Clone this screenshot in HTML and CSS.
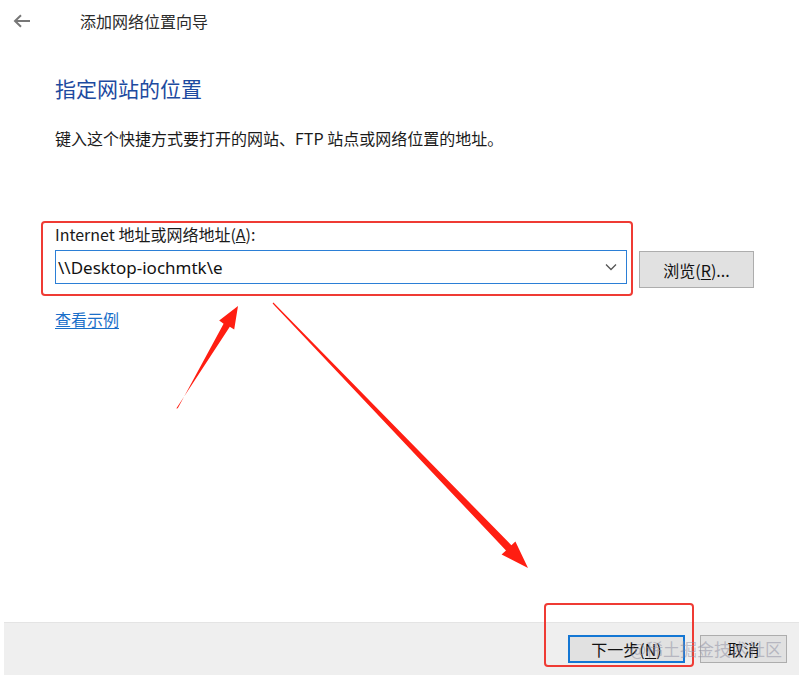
FILE: index.html
```html
<!DOCTYPE html>
<html lang="zh-CN">
<head>
<meta charset="utf-8">
<title>添加网络位置向导</title>
<link rel="stylesheet" href="styles.css">
</head>
<body>
<div class="window">
  <header class="titlebar">
    <svg class="back" width="18" height="14" viewBox="0 0 18 14" aria-hidden="true">
      <path d="M17 7H2.5M8 1.2L2 7l6 5.8" fill="none" stroke="#777" stroke-width="2"/>
    </svg>
    <span class="title">添加网络位置向导</span>
  </header>

  <main class="content">
    <h1 class="heading">指定网站的位置</h1>
    <p class="desc">键入这个快捷方式要打开的网站、FTP 站点或网络位置的地址。</p>

    <div class="field-row">
      <div class="field-box">
        <label class="label">Internet 地址或网络地址(<u>A</u>):</label>
        <div class="combo">
          <span class="combo-text">\\Desktop-iochmtk\e</span>
          <svg class="chev" width="12" height="8" viewBox="0 0 12 8" aria-hidden="true">
            <path d="M1 1.5l5 5 5-5" fill="none" stroke="#555" stroke-width="1.3"/>
          </svg>
        </div>
      </div>
      <button class="btn browse">浏览(<u>R</u>)...</button>
    </div>

    <a class="link" href="#">查看示例</a>
  </main>

  <footer class="footer">
    <button class="btn next">下一步(<u>N</u>)</button>
    <button class="btn cancel">取消</button>
  </footer>

  <div class="mark-next"></div>
  <div class="watermark">@稀土掘金技术社区</div>

  <svg class="arrows" width="799" height="675" viewBox="0 0 799 675" aria-hidden="true">
    <polygon fill="#ff1e12" points="176.3,408.6 177.8,408.3 223.6,323.8 219.2,320.6 238,306 234.2,329.4 229.8,326.8 176.3,408.6"/>
    <polygon fill="#ff1e12" points="272.6,303.6 273.4,302.6 511.4,545.2 515.4,541.4 528,568 501.6,554.4 506,550.4"/>
  </svg>
</div>
</body>
</html>
```

FILE: styles.css
```css
* { box-sizing: border-box; }

html, body {
  margin: 0;
  padding: 0;
  background: #ffffff;
}

body {
  font-family: "Noto Sans", "Noto Sans CJK SC", sans-serif;
  color: #1a1a1a;
}

.window {
  position: relative;
  width: 799px;
  height: 675px;
  display: flex;
  flex-direction: column;
  overflow: hidden;
}

.titlebar {
  height: 42px;
  display: flex;
  align-items: center;
  padding-left: 13px;
  flex: none;
}

.back { flex: none; }

.title {
  margin-left: 49px;
  font-family: "Noto Sans CJK SC", sans-serif;
  font-size: 16px;
  color: #2b2b2b;
}

.content {
  flex: 1;
  padding-left: 55px;
  display: flex;
  flex-direction: column;
  align-items: flex-start;
}

.heading {
  margin: 31px 0 0 0;
  font-family: "Noto Sans CJK SC", sans-serif;
  font-weight: 400;
  font-size: 21px;
  line-height: 30px;
  color: #1d4aa0;
}

.desc {
  margin: 24px 0 0 0;
  font-family: "Noto Sans CJK SC", sans-serif;
  font-size: 16px;
  line-height: 22px;
  color: #1a1a1a;
}

.field-row {
  margin: 72px 0 0 -14px;
  display: flex;
  align-items: flex-end;
}

.field-box {
  width: 592px;
  border: 2px solid #ef3b34;
  border-radius: 4px;
  padding: 1px 4px 10px 12px;
  display: flex;
  flex-direction: column;
}

.label {
  font-family: "Noto Sans CJK SC", sans-serif;
  font-size: 16px;
  line-height: 20px;
  color: #1a1a1a;
}

.combo {
  margin-top: 6px;
  height: 34px;
  border: 1px solid #2b7fd6;
  display: flex;
  align-items: center;
  justify-content: space-between;
  padding: 0 9px 0 2px;
  background: #fff;
}

.combo-text {
  font-family: "Noto Sans", "Noto Sans CJK SC", sans-serif;
  font-size: 17px;
  color: #111;
}

.btn {
  font-family: "Noto Sans CJK SC", sans-serif;
  background: #e1e1e1;
  border: 1px solid #adadad;
  color: #111;
  padding: 0;
  cursor: default;
}

.btn u { text-decoration-thickness: 1px; text-underline-offset: 2px; }

.browse {
  margin: 0 0 8px 6px;
  width: 115px;
  height: 37px;
  font-size: 16px;
}

.link {
  margin-top: 12px;
  font-family: "Noto Sans CJK SC", sans-serif;
  font-size: 16px;
  line-height: 22px;
  color: #1a6fc9;
  text-decoration: underline;
  text-underline-offset: 2px;
}

.footer {
  flex: none;
  height: 53px;
  margin-left: 4px;
  background: #efefef;
  border-top: 1px solid #e4e4e4;
  display: flex;
  align-items: flex-start;
  justify-content: flex-end;
  padding: 12px 12px 0 0;
  gap: 15px;
}

.next {
  width: 117px;
  height: 28px;
  border: 2px solid #1477d4;
  font-size: 16px;
}

.cancel {
  width: 87px;
  height: 28px;
  font-size: 16px;
}

.mark-next {
  position: absolute;
  left: 544px;
  top: 603px;
  width: 150px;
  height: 64px;
  border: 2px solid #ef3b34;
  border-radius: 4px;
}

.watermark {
  position: absolute;
  left: 630px;
  top: 636px;
  font-family: "Noto Sans CJK SC", sans-serif;
  font-size: 17px;
  color: rgba(140, 140, 160, 0.5);
  white-space: nowrap;
  pointer-events: none;
}

.arrows {
  position: absolute;
  left: 0;
  top: 0;
  pointer-events: none;
}
```
